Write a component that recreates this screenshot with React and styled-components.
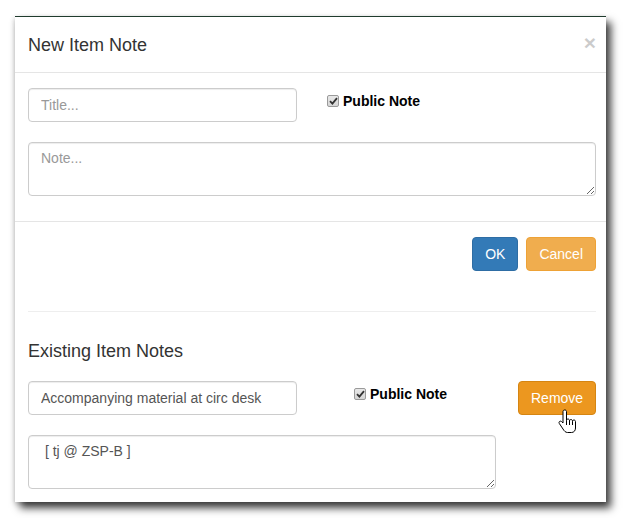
import React from "react";
import styled, { createGlobalStyle } from "styled-components";

const Global = createGlobalStyle`
  html, body { margin: 0; padding: 0; background: #fff; }
  body {
    font-family: "Liberation Sans", Arial, Helvetica, sans-serif;
    font-size: 14px;
    line-height: 1.42857;
    color: #333;
  }
  * { box-sizing: border-box; }
`;

const Page = styled.div`
  padding: 16px 0 0 15px;
  width: 623px;
  height: 518px;
`;

const Modal = styled.div`
  width: 591px;
  background: #fff;
  border-top: 1px solid #1f3b2d;
  box-shadow: 5px 6px 8px rgba(0, 0, 0, 0.75), -1px 2px 5px rgba(0, 0, 0, 0.18);
  position: relative;
`;

const Header = styled.div`
  display: flex;
  align-items: center;
  justify-content: space-between;
  padding: 15px 10px 14px 13px;
  border-bottom: 1px solid #e5e5e5;
`;

const Title = styled.h4`
  margin: 0;
  font-size: 18px;
  font-weight: 500;
  line-height: 26px;
  color: #333;
`;

const Close = styled.button`
  border: 0;
  background: transparent;
  padding: 0;
  margin-top: -6px;
  font-family: inherit;
  font-size: 21px;
  font-weight: 700;
  line-height: 1;
  color: #000;
  opacity: 0.2;
  cursor: pointer;
`;

const Body = styled.div`
  padding: 15px 10px 25px 13px;
`;

const Row = styled.div`
  display: grid;
  grid-template-columns: ${(p) => p.$cols};
  align-items: start;
`;

const Input = styled.input`
  display: block;
  width: 100%;
  height: 34px;
  padding: 6px 12px;
  font-family: inherit;
  font-size: 14px;
  color: #555;
  background: #fff;
  border: 1px solid #ccc;
  border-radius: 4px;
  box-shadow: inset 0 1px 1px rgba(0, 0, 0, 0.075);
  outline: none;
  &::placeholder { color: #999; }
`;

const Area = styled.textarea`
  display: block;
  width: ${(p) => p.$w || "100%"};
  height: 54px;
  margin-top: 20px;
  padding: 6px 12px;
  font-family: inherit;
  font-size: 14px;
  line-height: 1.42857;
  color: #555;
  background: #fff;
  border: 1px solid #ccc;
  border-radius: 4px;
  box-shadow: inset 0 1px 1px rgba(0, 0, 0, 0.075);
  resize: vertical;
  outline: none;
  &::placeholder { color: #999; }
`;

const CheckLabel = styled.label`
  display: flex;
  align-items: center;
  gap: 4px;
  margin: ${(p) => p.$m};
  font-weight: 700;
  font-size: 14px;
  color: #000;
`;

const Box = styled.span`
  display: inline-flex;
  align-items: center;
  justify-content: center;
  width: 12px;
  height: 12px;
  border: 1px solid #9a9a9a;
  border-radius: 2px;
  background: linear-gradient(#e8e8e8, #d6d6d6);
  margin-top: -2px;
`;

const Footer = styled.div`
  display: flex;
  justify-content: flex-end;
  gap: 8px;
  padding: 15px 10px 15px 13px;
  border-top: 1px solid #e5e5e5;
`;

const Btn = styled.button`
  height: 34px;
  padding: 6px 12px;
  font-family: inherit;
  font-size: 14px;
  line-height: 20px;
  color: #fff;
  background: ${(p) => p.$bg};
  border: 1px solid ${(p) => p.$bd};
  border-radius: 4px;
  cursor: pointer;
`;

const WideBtn = styled(Btn)`
  width: 100%;
`;

const Existing = styled.div`
  padding: 0 10px 13px 13px;
`;

const Rule = styled.hr`
  margin: 25px 0 26px;
  border: 0;
  border-top: 1px solid #eee;
`;

const SubTitle = styled.h4`
  margin: 0 0 17px;
  font-size: 18px;
  font-weight: 500;
  line-height: 26px;
  color: #333;
`;

const RemoveWrap = styled.div`
  position: relative;
`;

const Pointer = styled.svg`
  position: absolute;
  left: 40px;
  top: 28px;
  pointer-events: none;
`;

const Check = () => (
  <Box>
    <svg width="9" height="8" viewBox="0 0 9 8">
      <path d="M1 4.2 L3.4 6.6 L8 1.2" fill="none" stroke="#333" strokeWidth="1.8" />
    </svg>
  </Box>
);

export default function App() {
  return (
    <>
      <Global />
      <Page>
        <Modal>
          <Header>
            <Title>New Item Note</Title>
            <Close aria-label="Close">×</Close>
          </Header>
          <Body>
            <Row $cols="269px 1fr">
              <Input placeholder="Title..." />
              <CheckLabel $m="4px 0 0 30px">
                <Check />
                Public Note
              </CheckLabel>
            </Row>
            <Area placeholder="Note..." />
          </Body>
          <Footer>
            <Btn $bg="#337ab7" $bd="#2e6da4">OK</Btn>
            <Btn $bg="#f0ad4e" $bd="#eea236">Cancel</Btn>
          </Footer>
          <Existing>
            <Rule />
            <SubTitle>Existing Item Notes</SubTitle>
            <Row $cols="269px 1fr 78px">
              <Input defaultValue="Accompanying material at circ desk" />
              <CheckLabel $m="4px 0 0 57px">
                <Check />
                Public Note
              </CheckLabel>
              <RemoveWrap>
                <WideBtn $bg="#ec971f" $bd="#d58512">Remove</WideBtn>
                <Pointer width="20" height="25" viewBox="0 0 20 25">
                  <path
                    d="M6.5 1 C5.7 1 5 1.7 5 2.5 V14 L3.6 12.6 C3 12 2 12 1.4 12.6 C0.9 13.1 0.9 13.9 1.3 14.5 L5 20 C6 21.8 7.5 23.5 9.5 23.5 H13.5 C16 23.5 17.5 21.5 17.5 19 V12.5 C17.5 11.7 16.8 11 16 11 C15.2 11 14.5 11.7 14.5 12.5 V12 C14.5 11.2 13.8 10.5 13 10.5 C12.2 10.5 11.5 11.2 11.5 12 V11.5 C11.5 10.7 10.8 10 10 10 C9.2 10 8.5 10.7 8.5 11.5 V2.5 C8.5 1.7 7.8 1 7 1 Z"
                    fill="#fff"
                    stroke="#000"
                    strokeWidth="1"
                  />
                  <path d="M8.5 11.5 V16 M11.5 12 V16 M14.5 12.5 V16" stroke="#000" strokeWidth="1" fill="none" />
                </Pointer>
              </RemoveWrap>
            </Row>
            <Area $w="468px" defaultValue=" [ tj @ ZSP-B ]" />
          </Existing>
        </Modal>
      </Page>
    </>
  );
}
